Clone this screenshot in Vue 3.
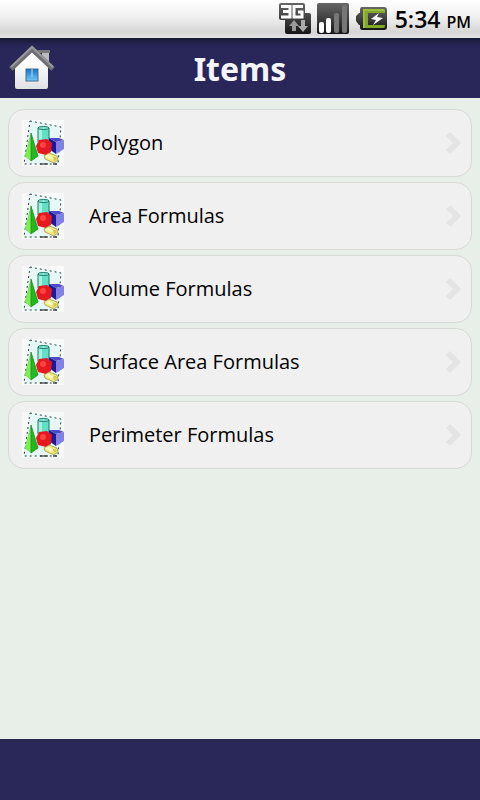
<script setup>
const items = [
  'Polygon',
  'Area Formulas',
  'Volume Formulas',
  'Surface Area Formulas',
  'Perimeter Formulas',
]
</script>

<template>
  <div class="screen">
    <div class="status">
      <svg class="network" viewBox="0 0 32 32" aria-hidden="true">
        <defs>
          <linearGradient id="dark" x1="0" y1="0" x2="0" y2="1">
            <stop offset="0" stop-color="#666" />
            <stop offset="0.5" stop-color="#404040" />
            <stop offset="1" stop-color="#151515" />
          </linearGradient>
        </defs>
        <path d="M2 0H24Q26 0 26 2V10H30Q32 10 32 12V29Q32 31 30 31H8Q6 31 6 29V17H2Q0 17 0 15V2Q0 0 2 0Z" fill="url(#dark)" />
        <path d="M2 3.5H11V14H2M4 8.5H11M24 3.5H15V14H23V9H19" fill="none" stroke="#fff" stroke-width="3" />
        <path d="M15 17L20 23H17V28H13V23H10Z" fill="#999" />
        <path d="M22 17H26V23H29L24 29L19 23H22Z" fill="#aaa" />
      </svg>
      <svg class="signal" viewBox="0 0 32 32" aria-hidden="true">
        <rect x="0" y="0" width="32" height="31" rx="2" fill="url(#dark)" />
        <rect x="2" y="19" width="5" height="11" rx="2" fill="#fff" />
        <rect x="9" y="15" width="5" height="15" rx="2" fill="#fff" />
        <rect x="17" y="10" width="5" height="20" rx="2" fill="#777" />
        <rect x="25" y="2" width="5" height="28" rx="2" fill="#777" />
      </svg>
      <svg class="battery" viewBox="0 0 34 24" aria-hidden="true">
        <path d="M7 0H29Q32 0 32 3V20Q32 23 29 23H7Q5 23 5 20V18H4L1 14V9L4 6H5V3Q5 0 7 0Z" fill="url(#dark)" />
        <path d="M8 2H28Q30 2 30 4V6H13V18H30V19Q30 21 28 21H8Z" fill="#82a826" />
        <path d="M8 2H28Q30 2 30 4H10V21H8Z" fill="#9cbe40" />
        <path d="M24 6L16 12L21 13L18 18L28 11L22 10Z" fill="#fff" />
      </svg>
      <div class="clock">5:34 <span class="period">PM</span></div>
    </div>

    <header class="header">
      <button class="home" type="button" aria-label="Home">
        <svg viewBox="0 0 48 46" aria-hidden="true">
          <defs>
            <linearGradient id="wall" x1="0" y1="0" x2="0" y2="1">
              <stop offset="0.3" stop-color="#fff" />
              <stop offset="1" stop-color="#e0e0e3" />
            </linearGradient>
            <linearGradient id="glass" x1="0" y1="0" x2="0" y2="1">
              <stop offset="0" stop-color="#1672c4" />
              <stop offset="1" stop-color="#72c7fa" />
            </linearGradient>
          </defs>
          <path d="M34 8H41V21L34 15Z" fill="#bbb" />
          <path d="M29 5H42V8H31Z" fill="#77777c" />
          <path d="M7 22L24 7L40 22V42Q40 44 38 44H9Q7 44 7 42Z" fill="url(#wall)" />
          <path d="M3 24L24 4L45 24" fill="none" stroke="#707074" stroke-width="5" />
          <path d="M3 22L24 2L45 22" fill="none" stroke="#98989b" stroke-width="2" />
          <rect x="18" y="24" width="12" height="12" fill="url(#glass)" stroke="#416f91" />
          <path d="M24 24V32" stroke="#b5dcf8" stroke-width="1" />
        </svg>
      </button>
      <h1 class="title">Items</h1>
    </header>

    <main class="content">
      <ul class="list">
        <li v-for="item in items" :key="item">
          <button class="row" type="button">
            <svg class="shapes" viewBox="0 0 44 46" aria-hidden="true">
              <rect x="1" width="42" height="46" fill="#f8faf9" />
              <path d="M9 1L40 7L37 44H3Z" fill="#e6f7f5" />
              <path d="M9 1L40 7L37 44H3Z" fill="none" stroke="#24444c" stroke-dasharray="2 3" />
              <path d="M17 8V25H28V8Z" fill="#62dfc5" />
              <path d="M17 8H21V25H17Z" fill="#a3f3df" />
              <ellipse cx="22.5" cy="8" rx="5.5" ry="1.5" fill="#8aebd9" stroke="#187866" />
              <path d="M17 8V22M28 8V20" stroke="#187866" />
              <path d="M10 13L4 36L10 41L17 36Z" fill="#21b91f" />
              <path d="M10 13L4 36L10 41Z" fill="#7deb51" />
              <path d="M10 13L10 41L17 36Z" fill="none" stroke="#158a19" stroke-width="0.7" />
              <path d="M28 18L35 22V34L28 29Z" fill="#1a1996" />
              <path d="M28 18L38 18L43 20L35 22Z" fill="#4c4cc8" />
              <path d="M35 22L43 20V29L35 34Z" fill="#8280e4" />
              <path d="M18 20L26 19L31 23L30 32L25 35L17 33L15 26Z" fill="#e61820" />
              <circle cx="22" cy="25" r="3" fill="#ff4540" />
              <path d="M23 36L28 33L36 36L37 40L33 43L24 39Z" fill="#f2ec80" stroke="#9b8941" stroke-width="0.7" />
              <path d="M24 36L28 35L33 38L29 39Z" fill="#fffbc8" />
              <path d="M32 37L35 37L36 39L33 42Z" fill="#d8c854" />
              <path d="M19 44H27M32 44H36" stroke="#111" />
            </svg>
            <span class="label">{{ item }}</span>
            <svg class="arrow" viewBox="0 0 18 26" aria-hidden="true">
              <path d="M3 4L12 13L3 22" fill="none" stroke="#e4e4e4" stroke-width="6" />
            </svg>
          </button>
        </li>
      </ul>
    </main>

    <footer class="footer"></footer>
  </div>
</template>

<style>
body {
  margin: 0;
}
</style>

<style scoped>
.screen {
  display: flex;
  flex-direction: column;
  min-height: 100vh;
  background: #e8eee8;
  color: #000;
  font-family: "Open Sans", "Noto Sans", sans-serif;
}

.status {
  display: flex;
  align-items: center;
  justify-content: flex-end;
  height: 38px;
  padding-right: 9px;
  background: linear-gradient(#fff, #f0f0f0 45%, #d5d5d5 85%, #e4e4e4);
}

.network,
.signal {
  width: 32px;
  height: 32px;
  margin-right: 6px;
}

.battery {
  width: 34px;
  height: 24px;
  margin-right: 6px;
}

.clock {
  padding-top: 2px;
  font-size: 23px;
  font-weight: 600;
  line-height: 32px;
}

.period {
  font-size: 16px;
}

.header {
  display: grid;
  grid-template-columns: 64px 1fr 64px;
  align-items: center;
  height: 60px;
  background: linear-gradient(#171936, #292759 8px);
}

.home {
  width: 48px;
  height: 46px;
  margin-left: 8px;
  padding: 0;
  border: 0;
  background: none;
}

.home svg {
  display: block;
}

.title {
  margin: 0;
  padding-top: 2px;
  color: #f5f5ff;
  font-family: "Noto Sans", sans-serif;
  font-size: 32px;
  font-weight: 700;
  line-height: 40px;
  text-align: center;
}

.content {
  flex: 1;
  padding: 11px 8px;
}

.list {
  display: flex;
  flex-direction: column;
  gap: 5px;
  margin: 0;
  padding: 0;
  list-style: none;
}

.row {
  display: flex;
  align-items: center;
  box-sizing: border-box;
  width: 100%;
  height: 68px;
  padding: 0 8px 0 12px;
  border: 1px solid #d5dad5;
  border-radius: 16px;
  background: #f0f0f0;
  color: inherit;
  font: inherit;
  text-align: left;
}

.shapes {
  flex: none;
  width: 44px;
  height: 46px;
}

.label {
  flex: 1;
  margin-left: 24px;
  font-size: 20px;
  line-height: 28px;
}

.arrow {
  width: 18px;
  height: 26px;
}

.footer {
  height: 61px;
  box-sizing: border-box;
  border-top: 3px solid #29294d;
  background: #292858;
}
</style>
